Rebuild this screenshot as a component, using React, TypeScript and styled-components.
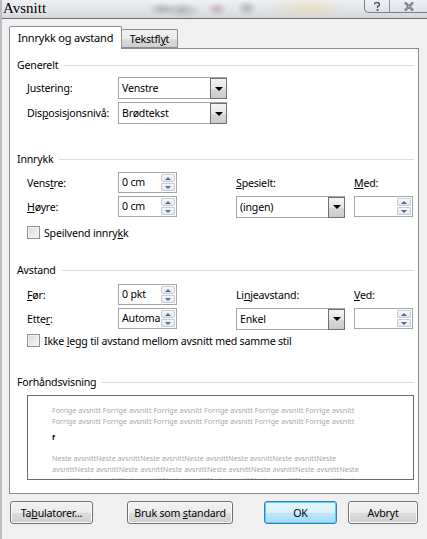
import React from "react";
import styled, { createGlobalStyle } from "styled-components";

const GlobalStyle = createGlobalStyle`
  html, body {
    margin: 0;
    padding: 0;
    background: #f0f0f0;
  }
  body {
    font-family: "Noto Sans", "Segoe UI", Arial, sans-serif;
    font-size: 10.6px;
    letter-spacing: -0.2px;
    color: #000;
  }
`;

const Window = styled.div`
  width: 427px;
  height: 539px;
  display: flex;
  flex-direction: column;
  background: #f0f0f0;
  border-left: 2px solid #b9bcc1;
  box-sizing: border-box;
  overflow: hidden;
`;

const TitleBar = styled.div`
  height: 19px;
  flex: none;
  display: flex;
  align-items: flex-start;
  border-bottom: 1px solid #6a6d72;
  box-sizing: border-box;
  background:
    radial-gradient(ellipse 14px 7px at 160px 9px, rgba(120,125,135,0.45), transparent),
    radial-gradient(ellipse 18px 8px at 180px 10px, rgba(110,115,125,0.4), transparent),
    radial-gradient(ellipse 10px 7px at 215px 9px, rgba(150,90,110,0.35), transparent),
    radial-gradient(ellipse 10px 8px at 245px 8px, rgba(110,115,125,0.4), transparent),
    radial-gradient(ellipse 40px 12px at 305px 9px, rgba(235,210,150,0.45), transparent),
    linear-gradient(180deg, #eef0f2 0%, #dfe2e6 60%, #d3d6db 100%);
`;

const Caption = styled.div`
  font-family: "Liberation Serif", "Times New Roman", serif;
  font-size: 15px;
  letter-spacing: 0;
  line-height: 17px;
  padding-left: 1px;
  color: #000;
  text-shadow: 0 0 6px rgba(255, 255, 255, 0.9);
`;

const CaptionButtons = styled.div`
  margin-left: auto;
  display: flex;
  height: 12px;
  border: 1px solid #7a8089;
  border-top: none;
  border-right: none;
  border-bottom-left-radius: 5px;
  overflow: hidden;
  background: linear-gradient(180deg, #eef1f4, #dde1e7);
`;

const CaptionButton = styled.div<{ $w: number }>`
  width: ${(p) => p.$w}px;
  display: flex;
  align-items: center;
  justify-content: center;
  & + & {
    border-left: 1px solid #8d939b;
  }
`;

const Body = styled.div`
  flex: 1;
  display: flex;
  flex-direction: column;
  padding: 7px 7px 0 7px;
`;

const TabRow = styled.div`
  display: flex;
  align-items: flex-end;
  height: 22px;
`;

const Tab = styled.div<{ $active?: boolean; $w: number }>`
  position: relative;
  z-index: ${(p) => (p.$active ? 2 : 1)};
  box-sizing: border-box;
  flex: none;
  width: ${(p) => p.$w}px;
  height: ${(p) => (p.$active ? 23 : 19)}px;
  margin-bottom: ${(p) => (p.$active ? -1 : 0)}px;
  padding-top: ${(p) => (p.$active ? 3 : 2)}px;
  text-align: center;
  border: 1px solid #898c95;
  border-bottom: ${(p) => (p.$active ? "none" : "1px solid #898c95")};
  border-left: ${(p) => (p.$active ? "1px solid #898c95" : "none")};
  border-radius: 2px 2px 0 0;
  background: ${(p) =>
    p.$active ? "#ffffff" : "linear-gradient(180deg, #f2f2f2 0%, #ebebeb 50%, #dddddd 51%, #cfcfcf 100%)"};
  font-size: ${(p) => (p.$active ? 11 : 10.6)}px;
  line-height: 15px;
  white-space: nowrap;
`;

const Panel = styled.div`
  box-sizing: border-box;
  width: 410px;
  height: 446px;
  border: 1px solid #898c95;
  background: #ffffff;
  padding: 9px 4px 0 7px;
  display: flex;
  flex-direction: column;
`;

const GroupHeading = styled.div<{ $mt: number }>`
  margin-top: ${(p) => p.$mt}px;
  display: flex;
  align-items: center;
  height: 14px;
  line-height: 14px;
  white-space: nowrap;

  &::after {
    content: "";
    flex: 1;
    height: 1px;
    margin-left: 6px;
    background: #d5dfe5;
  }
`;

const HeadText = styled.span`
  color: #000;
`;

const FieldGrid = styled.div<{ $cols: string; $mt: number; $rows: string }>`
  margin-top: ${(p) => p.$mt}px;
  margin-left: 10px;
  display: grid;
  grid-template-columns: ${(p) => p.$cols};
  grid-template-rows: ${(p) => p.$rows};
  row-gap: 3px;
  align-items: center;
`;

const Label = styled.label<{ $col?: number; $row?: number }>`
  grid-column: ${(p) => p.$col ?? 1};
  grid-row: ${(p) => p.$row ?? 1};
  white-space: nowrap;
  line-height: 14px;
`;

const Cell = styled.div<{ $col: number; $row: number }>`
  grid-column: ${(p) => p.$col};
  grid-row: ${(p) => p.$row};
  display: flex;
  align-items: center;
`;

const SelectBox = styled.div<{ $w: number }>`
  box-sizing: border-box;
  width: ${(p) => p.$w}px;
  height: 22px;
  border: 1px solid #a5a5a5;
  background: #fff;
  display: flex;
  align-items: stretch;
`;

const SelectText = styled.div`
  flex: 1;
  padding-left: 3px;
  line-height: 20px;
  white-space: nowrap;
  overflow: hidden;
`;

const DropButton = styled.div`
  box-sizing: border-box;
  width: 17px;
  border: 1px solid #707070;
  margin: 0 -1px -1px 0;
  background: linear-gradient(180deg, #f4f4f4 0%, #e6e6e6 50%, #d8d8d8 51%, #cbcbcb 100%);
  display: flex;
  align-items: center;
  justify-content: center;

  &::before {
    content: "";
    width: 0;
    height: 0;
    border-left: 4px solid transparent;
    border-right: 4px solid transparent;
    border-top: 4px solid #000;
  }
`;

const SpinBox = styled.div`
  box-sizing: border-box;
  width: 59px;
  height: 21px;
  border: 1px solid #a5a5a5;
  background: #fff;
  display: flex;
`;

const SpinText = styled.div`
  flex: 1;
  min-width: 0;
  padding-left: 3px;
  line-height: 19px;
  white-space: nowrap;
  overflow: hidden;
`;

const SpinButtons = styled.div`
  width: 15px;
  flex: none;
  display: flex;
  flex-direction: column;
  padding: 1px 1px 1px 0;
  gap: 1px;
  box-sizing: border-box;
`;

const SpinHalf = styled.div<{ $down?: boolean }>`
  flex: 1;
  box-sizing: border-box;
  border: 1px solid #c7ccd4;
  border-radius: 1px;
  background: linear-gradient(180deg, #f7f8fa, #e4e7ec);
  display: flex;
  align-items: center;
  justify-content: center;

  &::before {
    content: "";
    width: 0;
    height: 0;
    border-left: 3px solid transparent;
    border-right: 3px solid transparent;
    ${(p) => (p.$down ? "border-top: 3px solid #4e6a93;" : "border-bottom: 3px solid #4e6a93;")}
  }
`;

const CheckRow = styled.div<{ $mt: number }>`
  margin-top: ${(p) => p.$mt}px;
  margin-left: 10px;
  display: flex;
  align-items: center;
  gap: 4px;
  height: 13px;
  white-space: nowrap;
`;

const CheckBox = styled.div`
  box-sizing: border-box;
  width: 13px;
  height: 13px;
  border: 1px solid #8e8f8f;
  background: linear-gradient(135deg, #d8d8d8, #f7f7f7);
  box-shadow: inset 0 0 0 1px #f4f4f4;
`;

const Preview = styled.div`
  margin: 6px 0 0 10px;
  box-sizing: border-box;
  height: 85px;
  border: 1px solid #6b6b6b;
  background: #fff;
  overflow: hidden;
  padding: 9px 0 0 24px;
`;

const PreviewLine = styled.div<{ $mt?: number; $dark?: boolean }>`
  margin-top: ${(p) => p.$mt ?? 0}px;
  font-size: 7.2px;
  letter-spacing: 0;
  line-height: 11px;
  white-space: nowrap;
  color: ${(p) => (p.$dark ? "#000" : "#a8a8a8")};
  font-weight: ${(p) => (p.$dark ? 700 : 400)};
`;

const ButtonRow = styled.div`
  display: flex;
  margin-top: 7px;
  padding-left: 1px;
`;

const Button = styled.div<{ $w: number; $ml: number; $default?: boolean }>`
  box-sizing: border-box;
  width: ${(p) => p.$w}px;
  height: 23px;
  margin-left: ${(p) => p.$ml}px;
  border: 1px solid ${(p) => (p.$default ? "#3c7fb1" : "#707070")};
  border-radius: 3px;
  background: ${(p) =>
    p.$default
      ? "linear-gradient(180deg, #eaf6fd 0%, #d9f0fc 50%, #bee6fd 51%, #a7d9f5 100%)"
      : "linear-gradient(180deg, #f2f2f2 0%, #ebebeb 50%, #dddddd 51%, #cfcfcf 100%)"};
  box-shadow: inset 0 0 0 1px ${(p) => (p.$default ? "#48d8fb" : "#fcfcfc")};
  display: flex;
  align-items: center;
  justify-content: center;
  white-space: nowrap;
  line-height: 14px;
`;

const U = styled.span`
  text-decoration: underline;
`;

function Heading({ text, mt }: { text: React.ReactNode; mt: number }) {
  return (
    <GroupHeading $mt={mt}>
      <HeadText>{text}</HeadText>
    </GroupHeading>
  );
}

function Select({ value, w }: { value: string; w: number }) {
  return (
    <SelectBox $w={w}>
      <SelectText>{value}</SelectText>
      <DropButton />
    </SelectBox>
  );
}

function Spinner({ value }: { value?: string }) {
  return (
    <SpinBox>
      <SpinText>{value ?? ""}</SpinText>
      <SpinButtons>
        <SpinHalf />
        <SpinHalf $down />
      </SpinButtons>
    </SpinBox>
  );
}

const indentCols = "91px 59px 59px 109px 9px 59px";

export default function App() {
  return (
    <>
      <GlobalStyle />
      <Window>
        <TitleBar>
          <Caption>Avsnitt</Caption>
          <CaptionButtons>
            <CaptionButton $w={24}>
              <svg width="8" height="9" viewBox="0 0 8 9">
                <path d="M1.5 2.5 Q1.5 0.5 4 0.5 Q6.5 0.5 6.5 2.5 Q6.5 4 4.5 4.5 L4.5 6" fill="none" stroke="#4a5058" strokeWidth="1.3" />
                <rect x="3.6" y="7" width="1.8" height="1.8" fill="#4a5058" />
              </svg>
            </CaptionButton>
            <CaptionButton $w={37}>
              <svg width="10" height="9" viewBox="0 0 10 9">
                <path d="M1 0.5 L9 8.5 M9 0.5 L1 8.5" stroke="#4a5058" strokeWidth="2.2" />
                <path d="M1 0.5 L9 8.5 M9 0.5 L1 8.5" stroke="#f4f6f8" strokeWidth="0.8" />
              </svg>
            </CaptionButton>
          </CaptionButtons>
        </TitleBar>

        <Body>
          <TabRow>
            <Tab $active $w={113}>
              Innrykk o<U>g</U> avstand
            </Tab>
            <Tab $w={56}>
              Tekstfl<U>y</U>t
            </Tab>
          </TabRow>

          <Panel>
            <Heading text="Generelt" mt={0} />
            <FieldGrid $cols="91px 109px" $rows="22px 22px" $mt={5}>
              <Label $row={1}>
                <U>J</U>ustering:
              </Label>
              <Cell $col={2} $row={1}>
                <Select value="Venstre" w={109} />
              </Cell>
              <Label $row={2}>
                Dis<U>p</U>osisjonsnivå:
              </Label>
              <Cell $col={2} $row={2}>
                <Select value="Brødtekst" w={109} />
              </Cell>
            </FieldGrid>

            <Heading text="Innrykk" mt={28} />
            <FieldGrid $cols={indentCols} $rows="21px 21px" $mt={6}>
              <Label $row={1}>
                Vens<U>t</U>re:
              </Label>
              <Cell $col={2} $row={1}>
                <Spinner value="0 cm" />
              </Cell>
              <Label $col={4} $row={1}>
                <U>S</U>pesielt:
              </Label>
              <Label $col={6} $row={1}>
                <U>M</U>ed:
              </Label>
              <Label $row={2}>
                <U>H</U>øyre:
              </Label>
              <Cell $col={2} $row={2}>
                <Spinner value="0 cm" />
              </Cell>
              <Cell $col={4} $row={2}>
                <Select value="(ingen)" w={109} />
              </Cell>
              <Cell $col={6} $row={2}>
                <Spinner />
              </Cell>
            </FieldGrid>
            <CheckRow $mt={9}>
              <CheckBox />
              <span>
                Speilvend innry<U>k</U>k
              </span>
            </CheckRow>

            <Heading text="Avstand" mt={24} />
            <FieldGrid $cols={indentCols} $rows="21px 21px" $mt={7}>
              <Label $row={1}>
                <U>F</U>ør:
              </Label>
              <Cell $col={2} $row={1}>
                <Spinner value="0 pkt" />
              </Cell>
              <Label $col={4} $row={1}>
                Li<U>n</U>jeavstand:
              </Label>
              <Label $col={6} $row={1}>
                <U>V</U>ed:
              </Label>
              <Label $row={2}>
                Ette<U>r</U>:
              </Label>
              <Cell $col={2} $row={2}>
                <Spinner value="Automa" />
              </Cell>
              <Cell $col={4} $row={2}>
                <Select value="Enkel" w={109} />
              </Cell>
              <Cell $col={6} $row={2}>
                <Spinner />
              </Cell>
            </FieldGrid>
            <CheckRow $mt={5}>
              <CheckBox />
              <span>
                Ikke <U>l</U>egg til avstand mellom avsnitt med samme stil
              </span>
            </CheckRow>

            <Heading text="Forhåndsvisning" mt={28} />
            <Preview>
              <PreviewLine>
                Forrige avsnitt Forrige avsnitt Forrige avsnitt Forrige avsnitt Forrige avsnitt Forrige avsnitt
              </PreviewLine>
              <PreviewLine>
                Forrige avsnitt Forrige avsnitt Forrige avsnitt Forrige avsnitt Forrige avsnitt Forrige avsnitt
              </PreviewLine>
              <PreviewLine $mt={5} $dark>
                f
              </PreviewLine>
              <PreviewLine $mt={10}>
                Neste avsnittNeste avsnittNeste avsnittNeste avsnittNeste avsnittNeste avsnittNeste
              </PreviewLine>
              <PreviewLine>
                avsnittNeste avsnittNeste avsnittNeste avsnittNeste avsnittNeste avsnittNeste avsnittNeste
              </PreviewLine>
              <PreviewLine>
                avsnittNeste avsnittNeste avsnittNeste avsnittNeste avsnittNeste avsnittNeste avsnittNeste
              </PreviewLine>
            </Preview>
          </Panel>

          <ButtonRow>
            <Button $w={83} $ml={0}>
              <span>
                Ta<U>b</U>ulatorer...
              </span>
            </Button>
            <Button $w={106} $ml={34}>
              <span>
                Bruk som <U>s</U>tandard
              </span>
            </Button>
            <Button $w={73} $ml={31} $default>
              <span>OK</span>
            </Button>
            <Button $w={70} $ml={11}>
              <span>Avbryt</span>
            </Button>
          </ButtonRow>
        </Body>
      </Window>
    </>
  );
}
